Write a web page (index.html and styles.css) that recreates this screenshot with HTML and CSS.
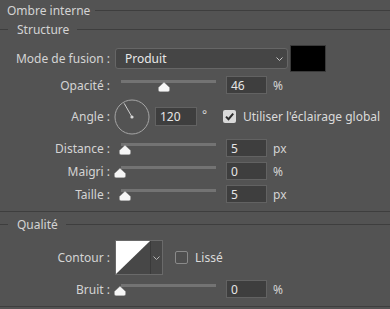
FILE: index.html
```html
<!DOCTYPE html>
<html lang="fr">
<head>
<meta charset="utf-8">
<title>Ombre interne</title>
<link rel="stylesheet" href="styles.css">
</head>
<body>
<div class="dlg">
  <div class="title"><span>Ombre interne</span><i class="rule"></i></div>

  <section class="group">
    <div class="ghead"><i class="lead"></i><span>Structure</span><i class="rule"></i></div>

    <div class="row r-mode">
      <span class="lbl">Mode de fusion :</span>
      <div class="select"><span>Produit</span>
        <svg class="chev" width="7" height="4" viewBox="0 0 7 4"><polyline points="0.5,0.5 3.5,3.5 6.5,0.5" fill="none" stroke="#c4c4c4" stroke-width="1"/></svg>
      </div>
      <div class="swatch"></div>
    </div>

    <div class="row r-slider r-first">
      <span class="lbl">Opacité :</span>
      <div class="slider"><i class="track"></i>
        <svg class="thumb" style="left:43px" width="12" height="10" viewBox="0 0 12 10"><path d="M6 0.3 L11.6 5.4 V8 Q11.6 9.7 9.9 9.7 H2.1 Q0.4 9.7 0.4 8 V5.4 Z" fill="#f6f6f6" stroke="#8a8a8a" stroke-width="0.5"/></svg>
      </div>
      <div class="num">46</div><span class="unit">%</span>
    </div>

    <div class="row r-angle">
      <span class="lbl">Angle :</span>
      <svg class="dial" width="36" height="36" viewBox="0 0 36 36">
        <circle cx="18" cy="18" r="17" fill="none" stroke="#a6a6a6" stroke-width="1"/>
        <line x1="18" y1="18" x2="10.2" y2="4.4" stroke="#d0d0d0" stroke-width="1"/>
        <circle cx="18" cy="18" r="1.6" fill="#d8d8d8"/>
      </svg>
      <div class="num num-angle">120</div><span class="deg">°</span>
      <span class="cb cb-on"><svg width="13" height="13" viewBox="0 0 13 13"><path d="M3 6.6 L5.5 9.2 L10.2 3.6" fill="none" stroke="#2c2c2c" stroke-width="2"/></svg></span>
      <span class="cblabel">Utiliser l'éclairage global</span>
    </div>

    <div class="row r-slider">
      <span class="lbl">Distance :</span>
      <div class="slider"><i class="track"></i>
        <svg class="thumb" style="left:4px" width="12" height="10" viewBox="0 0 12 10"><path d="M6 0.3 L11.6 5.4 V8 Q11.6 9.7 9.9 9.7 H2.1 Q0.4 9.7 0.4 8 V5.4 Z" fill="#f6f6f6" stroke="#8a8a8a" stroke-width="0.5"/></svg>
      </div>
      <div class="num">5</div><span class="unit">px</span>
    </div>

    <div class="row r-slider">
      <span class="lbl">Maigri :</span>
      <div class="slider"><i class="track"></i>
        <svg class="thumb" style="left:-1px" width="12" height="10" viewBox="0 0 12 10"><path d="M6 0.3 L11.6 5.4 V8 Q11.6 9.7 9.9 9.7 H2.1 Q0.4 9.7 0.4 8 V5.4 Z" fill="#f6f6f6" stroke="#8a8a8a" stroke-width="0.5"/></svg>
      </div>
      <div class="num">0</div><span class="unit">%</span>
    </div>

    <div class="row r-slider">
      <span class="lbl">Taille :</span>
      <div class="slider"><i class="track"></i>
        <svg class="thumb" style="left:4px" width="12" height="10" viewBox="0 0 12 10"><path d="M6 0.3 L11.6 5.4 V8 Q11.6 9.7 9.9 9.7 H2.1 Q0.4 9.7 0.4 8 V5.4 Z" fill="#f6f6f6" stroke="#8a8a8a" stroke-width="0.5"/></svg>
      </div>
      <div class="num">5</div><span class="unit">px</span>
    </div>
  </section>

  <section class="group group-q">
    <div class="ghead ghead-q"><i class="lead"></i><span>Qualité</span><i class="rule"></i></div>

    <div class="row r-contour">
      <span class="lbl">Contour :</span>
      <div class="contour">
        <svg class="curve" width="34" height="33" viewBox="0 0 34 33"><rect width="34" height="33" fill="#474747"/><polygon points="0,0 34,0 0,33" fill="#ffffff"/></svg>
        <i class="divider"></i>
        <span class="carrow"><svg width="7" height="4" viewBox="0 0 7 4"><polyline points="0.5,0.5 3.5,3.5 6.5,0.5" fill="none" stroke="#b4b4b4" stroke-width="1"/></svg></span>
      </div>
      <span class="cb cb-off"></span>
      <span class="cblabel">Lissé</span>
    </div>

    <div class="row r-slider">
      <span class="lbl">Bruit :</span>
      <div class="slider"><i class="track"></i>
        <svg class="thumb" style="left:-1px" width="12" height="10" viewBox="0 0 12 10"><path d="M6 0.3 L11.6 5.4 V8 Q11.6 9.7 9.9 9.7 H2.1 Q0.4 9.7 0.4 8 V5.4 Z" fill="#f6f6f6" stroke="#8a8a8a" stroke-width="0.5"/></svg>
      </div>
      <div class="num">0</div><span class="unit">%</span>
    </div>
  </section>
</div>
</body>
</html>
```

FILE: styles.css
```css
html, body {
  margin: 0;
  padding: 0;
}
body {
  background: #535353;
  font-family: "Noto Sans", "Open Sans", sans-serif;
  font-size: 12px;
  color: #d4d4d4;
  width: 390px;
  height: 309px;
  overflow: hidden;
}
.dlg {
  width: 390px;
}
.rule, .lead {
  display: block;
  height: 1px;
  background: #3e3e3e;
}
.title {
  display: flex;
  align-items: center;
  height: 21px;
  padding-left: 7px;
}
.title .rule {
  flex: 1;
  margin-left: 5px;
}
.group {
  border-bottom: 1px solid #3e3e3e;
  padding-bottom: 8px;
}
.ghead {
  display: flex;
  align-items: center;
  height: 17px;
}
.ghead .lead {
  width: 8px;
  margin-right: 9px;
}
.ghead .rule {
  flex: 1;
  margin-left: 8px;
}
.ghead-q {
  height: 25px;
}
.row {
  display: flex;
  align-items: center;
}
.lbl {
  flex: none;
  width: 110px;
  margin-right: 5px;
  text-align: right;
  white-space: nowrap;
}
.r-mode {
  margin-top: 7px;
  height: 27px;
}
.select {
  box-sizing: border-box;
  width: 173px;
  height: 21px;
  border: 1px solid #666666;
  border-radius: 3px;
  background: #454545;
  color: #e8e8e8;
  display: flex;
  align-items: center;
  justify-content: space-between;
  padding: 0 4px 0 9px;
}
.swatch {
  box-sizing: border-box;
  width: 36px;
  height: 27px;
  margin-left: 2px;
  border: 1px solid #3a3a3a;
  background: #000000;
}
.r-slider {
  height: 18px;
  margin-top: 5px;
}
.r-first {
  margin-top: 4px;
}
.slider {
  position: relative;
  flex: none;
  width: 101px;
  height: 18px;
  margin-right: 10px;
}
.track {
  position: absolute;
  left: 6px;
  right: 0;
  top: 4px;
  height: 3px;
  background: #737373;
}
.thumb {
  position: absolute;
  top: 6px;
}
.num {
  box-sizing: border-box;
  flex: none;
  width: 41px;
  height: 18px;
  border: 1px solid #626262;
  background: #3e3e3e;
  color: #e6e6e6;
  padding-left: 4px;
  display: flex;
  align-items: center;
}
.unit {
  margin-left: 6px;
}
.r-angle {
  height: 35px;
  margin-top: 5px;
}
.dial {
  flex: none;
  margin-left: -1px;
  margin-right: 5px;
}
.num-angle {
  width: 42px;
  height: 19px;
}
.deg {
  box-sizing: border-box;
  width: 26px;
  padding-left: 5px;
  align-self: flex-start;
  margin-top: 7px;
}
.cb {
  box-sizing: border-box;
  flex: none;
  width: 13px;
  height: 13px;
  border-radius: 2px;
  display: block;
}
.cb svg {
  display: block;
}
.cb-on {
  background: #d9d9d9;
}
.cb-off {
  border: 1px solid #8a8a8a;
  background: #4f4f4f;
  margin-left: 12px;
}
.cblabel {
  margin-left: 7px;
  color: #dadada;
}
.r-contour {
  height: 35px;
  margin-top: 3px;
}
.contour {
  box-sizing: border-box;
  flex: none;
  width: 48px;
  height: 35px;
  border: 1px solid #6a6a6a;
  display: flex;
  background: #474747;
}
.curve {
  display: block;
}
.divider {
  display: block;
  width: 1px;
  background: #3a3a3a;
}
.carrow {
  flex: 1;
  display: flex;
  align-items: center;
  justify-content: center;
}
.group-q {
  padding-bottom: 8px;
}
```
